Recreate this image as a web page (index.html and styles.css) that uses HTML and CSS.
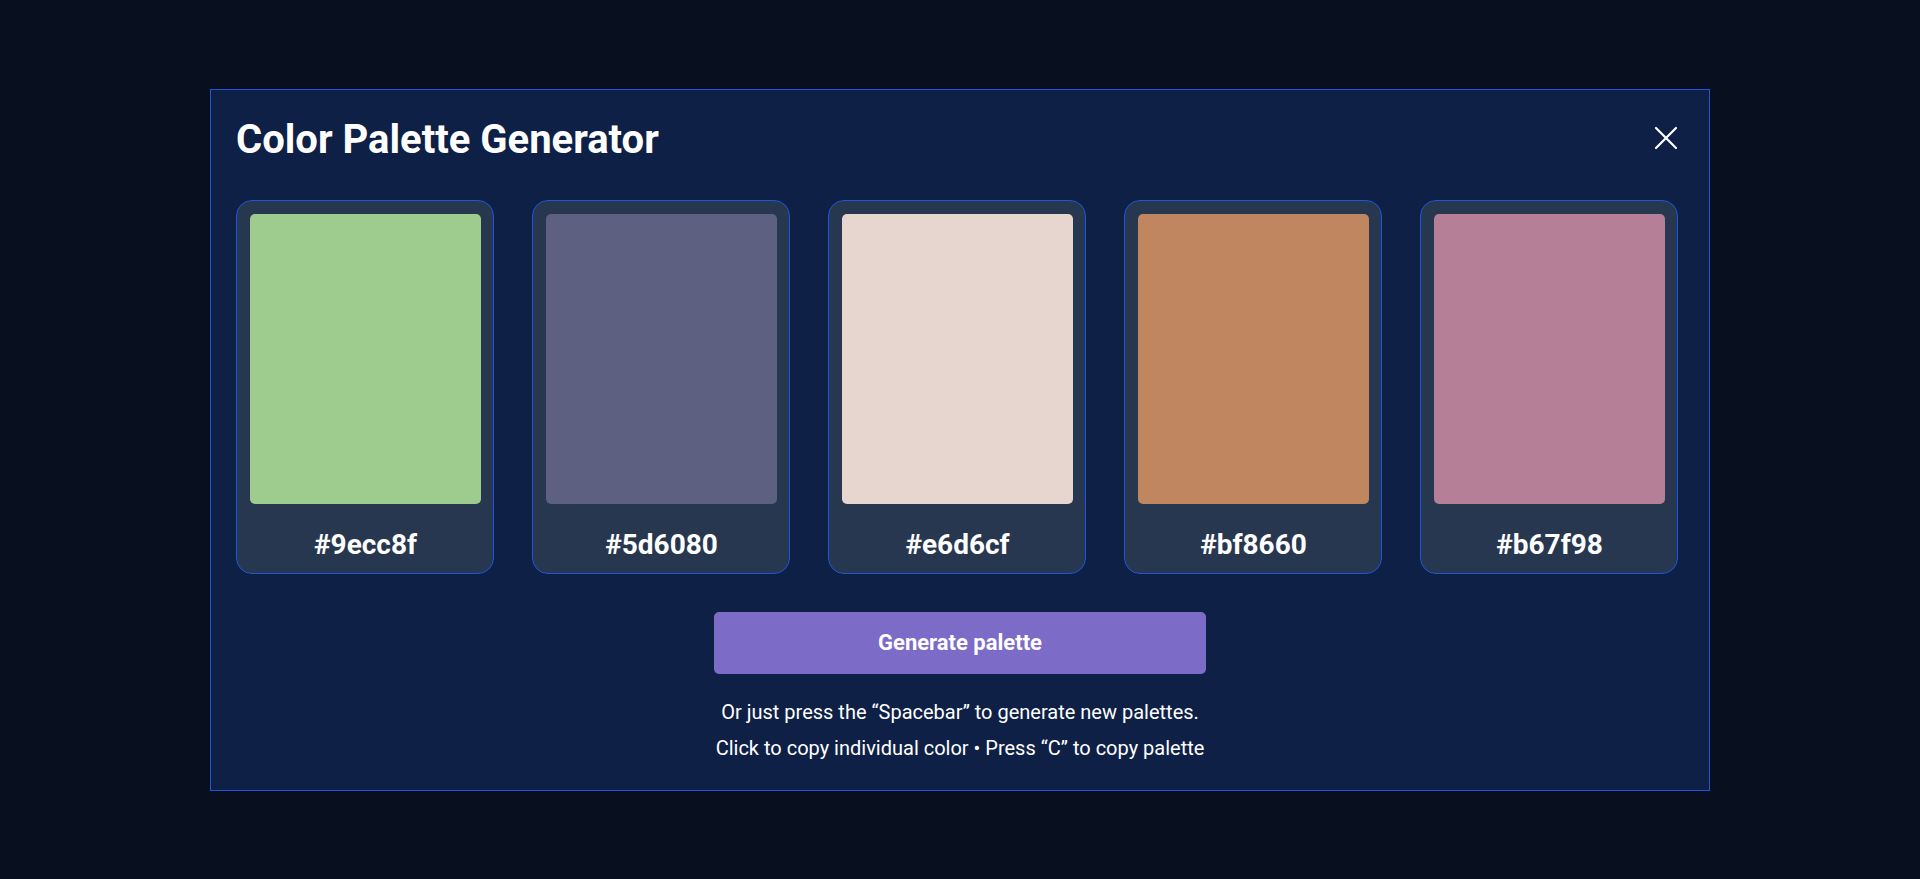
FILE: index.html
```html
<!DOCTYPE html>
<html lang="en">
<head>
<meta charset="utf-8">
<title>Color Palette Generator</title>
<link rel="stylesheet" href="styles.css">
</head>
<body>
<div class="modal">
  <div class="modal-header">
    <h1 class="title">Color Palette Generator</h1>
    <button class="close" aria-label="Close">
      <svg width="24" height="24" viewBox="0 0 24 24" fill="none" stroke="#ffffff" stroke-width="2.2" stroke-linecap="round"><path d="M2 2L22 22M22 2L2 22"/></svg>
    </button>
  </div>
  <div class="cards">
    <div class="card"><div class="swatch" style="background:#9ecc8f"></div><div class="hex">#9ecc8f</div></div>
    <div class="card"><div class="swatch" style="background:#5d6080"></div><div class="hex">#5d6080</div></div>
    <div class="card"><div class="swatch" style="background:#e6d6cf"></div><div class="hex">#e6d6cf</div></div>
    <div class="card"><div class="swatch" style="background:#bf8660"></div><div class="hex">#bf8660</div></div>
    <div class="card"><div class="swatch" style="background:#b67f98"></div><div class="hex">#b67f98</div></div>
  </div>
  <button class="generate">Generate palette</button>
  <p class="hint">Or just press the “Spacebar” to generate new palettes.</p>
  <p class="hint">Click to copy individual color • Press “C” to copy palette</p>
</div>
</body>
</html>
```
FILE: styles.css
```css
* { box-sizing: border-box; }
html, body { margin: 0; height: 100%; }
body {
  background: #081020;
  font-family: Roboto, "Liberation Sans", sans-serif;
  color: #ffffff;
  display: flex;
  align-items: center;
  justify-content: center;
}
.modal {
  width: 1500px;
  height: 702px;
  background: #0e2045;
  border: 1px solid #1d56d8;
  padding: 22px 25px 0 25px;
  display: flex;
  flex-direction: column;
}
.modal-header {
  display: flex;
  justify-content: space-between;
  align-items: center;
  height: 56px;
  margin-right: 6px;
}
.title {
  margin: 0;
  font-size: 40px;
  font-weight: 700;
  line-height: 1;
}
.close {
  background: none;
  border: 0;
  padding: 0;
  width: 24px;
  height: 24px;
  margin-top: -3px;
  display: flex;
}
.cards {
  display: flex;
  gap: 38px;
  margin-top: 32px;
  margin-right: 6px;
}
.card {
  width: 258px;
  height: 374px;
  background: #283750;
  border: 1px solid #1d56d8;
  border-radius: 16px;
  padding: 13px 12px 0 13px;
  display: flex;
  flex-direction: column;
}
.swatch {
  height: 290px;
  border-radius: 5px;
}
.hex {
  text-align: center;
  font-size: 28px;
  font-weight: 700;
  margin-top: 26px;
  line-height: 30px;
}
.generate {
  align-self: center;
  width: 492px;
  height: 62px;
  margin-top: 38px;
  background: #7c6cc8;
  border: 0;
  border-radius: 5px;
  color: #ffffff;
  font-family: Roboto, "Liberation Sans", sans-serif;
  font-size: 22px;
  font-weight: 700;
}
.hint {
  margin: 0;
  text-align: center;
  font-size: 20px;
  line-height: 36px;
}
.generate + .hint { margin-top: 20px; }
```
